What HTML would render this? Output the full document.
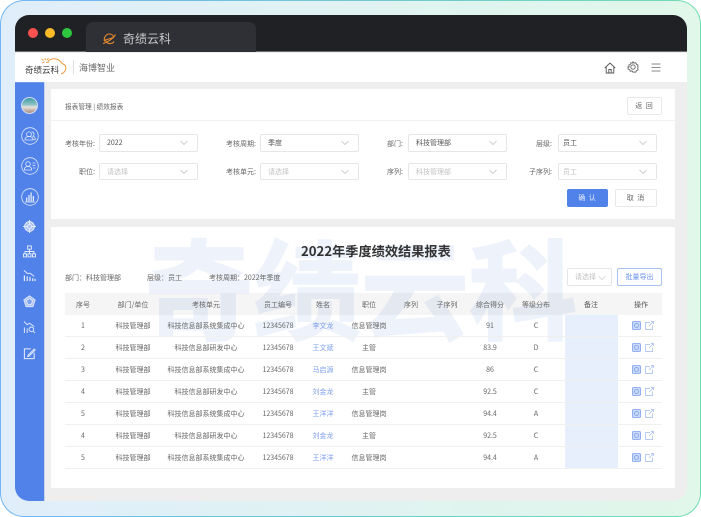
<!DOCTYPE html>
<html lang="zh">
<head>
<meta charset="utf-8">
<style>
html,body{margin:0;padding:0;width:701px;height:517px;overflow:hidden;background:#fff}
*{box-sizing:border-box}
body{font-family:"Noto Sans CJK SC","Liberation Sans",sans-serif;color:#666}
.a{position:absolute}
#outer{position:absolute;left:0;top:0;width:701px;height:517px;border-radius:24px;padding:1px;background:linear-gradient(90deg,#72b5f2,#6fdcb4)}
#outer>div{width:100%;height:100%;border-radius:23px;background:linear-gradient(90deg,#e0eefb,#e0f7e9)}
#win{position:absolute;left:15px;top:15px;width:672px;height:486px;border-radius:14px;overflow:hidden;background:#eee;filter:blur(.35px)}
.lb{position:absolute;font-size:7px;line-height:12px;color:#666;text-align:right;white-space:nowrap}
.sel{position:absolute;width:99px;height:18px;background:#fff;border:1px solid #e6e6e6;border-radius:2px;font-size:7px;line-height:17px;color:#555;padding-left:7px;white-space:nowrap}
.sel.ph{color:#c2c2c2;height:17px;line-height:16px}
.sel svg{position:absolute;right:9px;top:5px}
.btn{position:absolute;border:1px solid #e8e8e8;background:#fff;border-radius:2px;font-size:7px;text-align:center;color:#666;white-space:nowrap}
.row{position:absolute;left:50px;width:597px;height:22px;border-bottom:1px solid #f0f0f0;font-size:7px;line-height:21px;color:#666}
.row span{position:absolute;top:1px;width:90px;text-align:center;white-space:nowrap}
.hd{background:rgba(0,0,0,.04);border:0;line-height:22px;color:#666}
.c1{left:-27px}.c2{left:23px}.c3{left:96px}.c4{left:168px}.c5{left:213px}.c6{left:259px}.c7{left:301px}.c8{left:337px}.c9{left:380px}.c10{left:426px}.c11{left:481px;color:#555}.c12{left:531px;color:#555}
.l{color:#7d9fec}
.row svg{position:absolute;top:6px}
</style>
</head>
<body>
<div id="outer"><div></div></div>
<div id="win">
  <!-- title bar -->
  <div class="a" style="left:0;top:0;width:672px;height:37px;background:#202125;border-bottom:1px solid #6d6e70"></div>
  <div class="a" style="left:13px;top:13px;width:10px;height:10px;border-radius:50%;background:#f9524f"></div>
  <div class="a" style="left:30px;top:13px;width:10px;height:10px;border-radius:50%;background:#fdbb28"></div>
  <div class="a" style="left:47px;top:13px;width:10px;height:10px;border-radius:50%;background:#2ec840"></div>
  <div class="a" style="left:71px;top:7px;width:170px;height:30px;background:#2f3035;border-radius:7px 7px 0 0"></div>
  <svg class="a" style="left:87px;top:17px" width="15" height="14" viewBox="0 0 15 14" fill="none" stroke="#e58a2e" stroke-width="1.1"><path d="M2.5 9.5C1.5 5.5 4 2 7.5 2c2.5 0 4 1.5 4 3.5L3.5 8c.5 2.5 3 4 5.5 3.5 1.5-.3 2.5-1 3-2"/><path d="M1 11.5C5 10.500 11 7 13.500 2.500"/></svg>
  <div class="a" style="left:108px;top:15px;font-size:12px;line-height:18px;color:#c9c9cb;white-space:nowrap">奇绩云科</div>

  <!-- header -->
  <div class="a" style="left:0;top:38px;width:672px;height:29px;background:#fff"></div>
  <div class="a" style="left:10px;top:49px;font-size:8.5px;line-height:12px;color:#3a3a3a;white-space:nowrap">奇绩云科</div>
  <svg class="a" style="left:25px;top:42px" width="28" height="20" viewBox="0 0 28 20" fill="none"><path d="M8 4C11 2 14 1.500 16 2c3 .7 5 2.500 6 4.500 2.500.8 4 2.500 3.800 5-.2 2.500-2 4.500-4.800 5.500" stroke="#ec9a3e" stroke-width="1"/><path d="M1.500 2l2 1.500M5 .8l.3 2.500M8.500 1l-1.500 2M2 6l2.500-1.200M6 5.500l3-.5" stroke="#eb9a3e" stroke-width=".9"/></svg>
  <div class="a" style="left:58px;top:45px;width:1px;height:14px;background:#ddd"></div>
  <div class="a" style="left:64px;top:46px;font-size:9px;line-height:13px;color:#666;white-space:nowrap">海博智业</div>
  <svg class="a" style="left:589px;top:47px" width="12" height="12" viewBox="0 0 12 12" fill="none" stroke="#555" stroke-width=".9"><path d="M.8 6L6 1l5.200 5M2.200 5v6h7.600V5M4.800 11V7.500h2.400V11"/></svg>
  <svg class="a" style="left:612px;top:46px" width="12" height="12" viewBox="0 0 12 12" fill="none" stroke="#666" stroke-width=".9"><path d="M6 .8l1.100 1.300 1.700-.3.600 1.600 1.600.6-.3 1.700L11.200 6l-.5 1.300.3 1.700-1.600.6-.6 1.600-1.700-.3L6 11.200l-1.100-1.300-1.700.3-.6-1.600-1.600-.6.3-1.700L.8 6l1.300-.3L1.800 4l1.600-.6.600-1.600 1.700.3z"/><circle cx="6" cy="6" r="2.200"/></svg>
  <svg class="a" style="left:636px;top:48px" width="10" height="9" viewBox="0 0 10 9" fill="none" stroke="#888" stroke-width=".9"><path d="M.5 1h9M.5 4.500h9M.5 8h9"/></svg>

  <!-- sidebar -->
  <div class="a" style="left:0;top:67px;width:29px;height:419px;background:#5082e9;border-top:1px solid #6f97ec"></div>
  <div class="a" style="left:29px;top:67px;width:1px;height:419px;background:#c5d4ee"></div>
  <div class="a" style="left:6px;top:82px;width:17px;height:17px;border-radius:50%;background:linear-gradient(180deg,#3d9aa8 0,#8fc4c4 45%,#e8e4dc 60%,#a58a80 100%);border:.5px solid #cfdcf6"></div>
  <svg class="a" style="left:6px;top:112px" width="18" height="18" viewBox="0 0 18 18" fill="none" stroke="#dfe8fb" stroke-width=".8"><circle cx="9" cy="9" r="8.300"/><circle cx="8" cy="7.300" r="2.400"/><path d="M4 13c0-2.500 1.500-3.500 4-3.500s4 1 4 3.500zM10.500 5c1.500-.3 2.500.8 2.500 2.200 0 1-.5 1.600-1 2 1.500.5 2.300 1.500 2.300 3.300h-2"/></svg>
  <svg class="a" style="left:6px;top:142px" width="18" height="18" viewBox="0 0 18 18" fill="none" stroke="#dfe8fb" stroke-width=".8"><circle cx="9" cy="9" r="8.300"/><circle cx="7" cy="7" r="2.300"/><path d="M3.300 13c0-2.500 1.500-3.500 3.700-3.500s3.700 1 3.700 3.500zM11.500 6h3M11.500 8.500h3M12 11h2.500"/></svg>
  <svg class="a" style="left:6px;top:173px" width="18" height="18" viewBox="0 0 18 18" fill="none" stroke="#dfe8fb" stroke-width=".8"><circle cx="9" cy="9" r="8.300"/><path d="M4 14h10"/><path d="M5 9.500h1.300V13.500H5zM7.300 7h1.300v6.500H7.300zM9.500 4.500h1.300v9H9.500zM11.700 8h1.300v5.500h-1.300z" fill="#dfe8fb" stroke="none"/></svg>
  <svg class="a" style="left:8px;top:205px" width="13" height="13" viewBox="0 0 14 14" fill="none" stroke="#e6edfc" stroke-width="1.100"><circle cx="7" cy="7" r="5.200" fill="#a8c0f3"/><circle cx="7" cy="7" r="2.200"/><path d="M7 0v4.500M7 9.500V14M0 7h4.500M9.500 7H14"/></svg>
  <svg class="a" style="left:8px;top:230px" width="13" height="13" viewBox="0 0 14 13" fill="none" stroke="#e6edfc" stroke-width="1"><rect x="5" y=".5" width="4" height="3.500"/><rect x=".5" y="9" width="3.300" height="3.300"/><rect x="5.300" y="9" width="3.300" height="3.300"/><rect x="10.200" y="9" width="3.300" height="3.300"/><path d="M7 4v5M2.200 9V6.500h9.600V9"/></svg>
  <svg class="a" style="left:8px;top:254px" width="13" height="13" viewBox="0 0 14 14" fill="none" stroke="#e6edfc" stroke-width="1"><path d="M1 1.500l4 3.500 2.500-.5 4.500 3.500"/><path d="M1.500 7v6M4.500 8v5M7.500 8.500V13M10.500 10v3M13 10.500V13" stroke-width="1.300"/></svg>
  <svg class="a" style="left:8px;top:280px" width="13" height="13" viewBox="0 0 14 14" fill="#e6edfc" stroke="#e6edfc" stroke-width=".8"><path d="M7 .8l6.200 4.500-2.400 7.300H3.200L.8 5.300z" fill-opacity=".65"/><path d="M7 3.800l3.200 2.300L9 10H5L3.800 6.100z" fill="#7b9eed"/></svg>
  <svg class="a" style="left:8px;top:305px" width="13" height="14" viewBox="0 0 14 15" fill="none" stroke="#e6edfc" stroke-width="1"><path d="M1 1.500l3.500 3.500L7 3.500 12 7"/><path d="M1.500 8v6M4.500 9v5"/><circle cx="9" cy="10" r="2.500"/><path d="M11 12l2 2"/></svg>
  <svg class="a" style="left:8px;top:332px" width="13" height="13" viewBox="0 0 14 14" fill="none" stroke="#e6edfc" stroke-width="1.100"><path d="M8.500 2H1.500v10.500H12V6"/><path d="M5.500 8.800L12 2.200l1 1-6.500 6.600-1.500.2z"/></svg>

  <!-- card 1 -->
  <div class="a" style="left:36px;top:74px;width:624px;height:130px;background:#fff"></div>
  <div class="a" style="left:36px;top:105px;width:624px;height:1px;background:#f2f2f2"></div>
  <div class="a" style="left:50px;top:85px;font-size:6.7px;line-height:12px;color:#666;white-space:nowrap">报表管理 | 绩效报表</div>
  <div class="btn" style="left:612px;top:82px;width:35px;height:18px;line-height:17px;letter-spacing:1px">返 回</div>

  <div class="lb" style="left:38px;top:123px;width:42px">考核年份:</div>
  <div class="sel" style="left:84px;top:119px">2022<svg width="8" height="6" viewBox="0 0 8 6" fill="none" stroke="#bbb" stroke-width=".7"><path d="M.5 1l3.500 3.500L7.500 1"/></svg></div>
  <div class="lb" style="left:199px;top:123px;width:42px">考核周期:</div>
  <div class="sel" style="left:245px;top:119px">季度<svg width="8" height="6" viewBox="0 0 8 6" fill="none" stroke="#bbb" stroke-width=".7"><path d="M.5 1l3.500 3.500L7.500 1"/></svg></div>
  <div class="lb" style="left:346px;top:123px;width:42px">部门:</div>
  <div class="sel" style="left:393px;top:119px">科技管理部<svg width="8" height="6" viewBox="0 0 8 6" fill="none" stroke="#bbb" stroke-width=".7"><path d="M.5 1l3.500 3.500L7.500 1"/></svg></div>
  <div class="lb" style="left:495px;top:123px;width:42px">层级:</div>
  <div class="sel" style="left:543px;top:119px;padding-left:4px">员工<svg width="8" height="6" viewBox="0 0 8 6" fill="none" stroke="#bbb" stroke-width=".7"><path d="M.5 1l3.500 3.500L7.500 1"/></svg></div>

  <div class="lb" style="left:38px;top:151px;width:42px">职位:</div>
  <div class="sel ph" style="left:84px;top:148px">请选择<svg width="8" height="6" viewBox="0 0 8 6" fill="none" stroke="#bbb" stroke-width=".7"><path d="M.5 1l3.500 3.500L7.500 1"/></svg></div>
  <div class="lb" style="left:199px;top:151px;width:42px">考核单元:</div>
  <div class="sel ph" style="left:245px;top:148px">请选择<svg width="8" height="6" viewBox="0 0 8 6" fill="none" stroke="#bbb" stroke-width=".7"><path d="M.5 1l3.500 3.500L7.500 1"/></svg></div>
  <div class="lb" style="left:346px;top:151px;width:42px">序列:</div>
  <div class="sel ph" style="left:393px;top:148px">科技管理部<svg width="8" height="6" viewBox="0 0 8 6" fill="none" stroke="#bbb" stroke-width=".7"><path d="M.5 1l3.500 3.500L7.500 1"/></svg></div>
  <div class="lb" style="left:495px;top:151px;width:42px">子序列:</div>
  <div class="sel ph" style="left:543px;top:148px;padding-left:4px">员工<svg width="8" height="6" viewBox="0 0 8 6" fill="none" stroke="#bbb" stroke-width=".7"><path d="M.5 1l3.500 3.500L7.500 1"/></svg></div>

  <div class="btn" style="left:552px;top:174px;width:41px;height:18px;line-height:17px;background:#5082e9;border-color:#5082e9;color:#e4ecfc;letter-spacing:1px">确 认</div>
  <div class="btn" style="left:600px;top:174px;width:42px;height:18px;line-height:17px;letter-spacing:1px">取 消</div>

  <!-- card 2 -->
  <div class="a" style="left:36px;top:212px;width:624px;height:261px;background:#fff;overflow:hidden">
    <div class="a" style="left:94px;top:-7px;font-size:108px;line-height:130px;font-weight:700;color:#edf2fb;white-space:nowrap;-webkit-text-stroke:2px #edf2fb;paint-order:stroke">奇绩云科</div>
  </div>
  <div class="a" style="left:286px;top:226px;font-size:13.2px;line-height:20px;font-weight:700;color:#333;white-space:nowrap">2022年季度绩效结果报表</div>
  <div class="lb" style="left:50px;top:257px">部门：科技管理部</div>
  <div class="lb" style="left:132px;top:257px">层级：员工</div>
  <div class="lb" style="left:194px;top:257px">考核周期：2022年季度</div>
  <div class="sel ph" style="left:552px;top:253px;width:45px;height:18px;line-height:17px">请选择<svg style="right:5px;top:6px" width="8" height="6" viewBox="0 0 8 6" fill="none" stroke="#ccc" stroke-width=".7"><path d="M.5 1l3.500 3.500L7.500 1"/></svg></div>
  <div class="btn" style="left:602px;top:253px;width:45px;height:18px;line-height:17px;border-color:#a9c2f4;color:#6f95ea">批量导出</div>

  <div class="a" style="left:550px;top:300px;width:53px;height:154px;background:#e8effc"></div>

  <div class="row hd" style="top:278px"><span class="c1">序号</span><span class="c2">部门/单位</span><span class="c3">考核单元</span><span class="c4">员工编号</span><span class="c5">姓名</span><span class="c6">职位</span><span class="c7">序列</span><span class="c8">子序列</span><span class="c9">综合得分</span><span class="c10">等级分布</span><span class="c11">备注</span><span class="c12">操作</span></div>

  <div class="row" style="top:300px"><span class="c1">1</span><span class="c2">科技管理部</span><span class="c3">科技信息部系统集成中心</span><span class="c4">12345678</span><span class="c5 l">李文龙</span><span class="c6">信息管理岗</span><span class="c9">91</span><span class="c10">C</span><svg style="left:567px" width="9" height="9" viewBox="0 0 9 9" fill="none" stroke="#7d9fec" stroke-width=".8"><rect x=".5" y=".5" width="8" height="8" rx="1" fill="#c9d9f8"/><circle cx="4.500" cy="4.500" r="2"/></svg><svg style="left:580px" width="9" height="9" viewBox="0 0 9 9" fill="none" stroke="#9db8f0" stroke-width=".7"><path d="M5 1.500H.5v7h7V4.500M4 5l4.500-4.500M6 .5h2.500V3"/></svg></div>
  <div class="row" style="top:322px"><span class="c1">2</span><span class="c2">科技管理部</span><span class="c3">科技信息部研发中心</span><span class="c4">12345678</span><span class="c5 l">王文斌</span><span class="c6">主管</span><span class="c9">83.9</span><span class="c10">D</span><svg style="left:567px" width="9" height="9" viewBox="0 0 9 9" fill="none" stroke="#7d9fec" stroke-width=".8"><rect x=".5" y=".5" width="8" height="8" rx="1" fill="#c9d9f8"/><circle cx="4.500" cy="4.500" r="2"/></svg><svg style="left:580px" width="9" height="9" viewBox="0 0 9 9" fill="none" stroke="#9db8f0" stroke-width=".7"><path d="M5 1.500H.5v7h7V4.500M4 5l4.500-4.500M6 .5h2.500V3"/></svg></div>
  <div class="row" style="top:344px"><span class="c1">3</span><span class="c2">科技管理部</span><span class="c3">科技信息部系统集成中心</span><span class="c4">12345678</span><span class="c5 l">马启源</span><span class="c6">信息管理岗</span><span class="c9">86</span><span class="c10">C</span><svg style="left:567px" width="9" height="9" viewBox="0 0 9 9" fill="none" stroke="#7d9fec" stroke-width=".8"><rect x=".5" y=".5" width="8" height="8" rx="1" fill="#c9d9f8"/><circle cx="4.500" cy="4.500" r="2"/></svg><svg style="left:580px" width="9" height="9" viewBox="0 0 9 9" fill="none" stroke="#9db8f0" stroke-width=".7"><path d="M5 1.500H.5v7h7V4.500M4 5l4.500-4.500M6 .5h2.500V3"/></svg></div>
  <div class="row" style="top:366px"><span class="c1">4</span><span class="c2">科技管理部</span><span class="c3">科技信息部研发中心</span><span class="c4">12345678</span><span class="c5 l">刘金龙</span><span class="c6">主管</span><span class="c9">92.5</span><span class="c10">C</span><svg style="left:567px" width="9" height="9" viewBox="0 0 9 9" fill="none" stroke="#7d9fec" stroke-width=".8"><rect x=".5" y=".5" width="8" height="8" rx="1" fill="#c9d9f8"/><circle cx="4.500" cy="4.500" r="2"/></svg><svg style="left:580px" width="9" height="9" viewBox="0 0 9 9" fill="none" stroke="#9db8f0" stroke-width=".7"><path d="M5 1.500H.5v7h7V4.500M4 5l4.500-4.500M6 .5h2.500V3"/></svg></div>
  <div class="row" style="top:388px"><span class="c1">5</span><span class="c2">科技管理部</span><span class="c3">科技信息部系统集成中心</span><span class="c4">12345678</span><span class="c5 l">王洋洋</span><span class="c6">信息管理岗</span><span class="c9">94.4</span><span class="c10">A</span><svg style="left:567px" width="9" height="9" viewBox="0 0 9 9" fill="none" stroke="#7d9fec" stroke-width=".8"><rect x=".5" y=".5" width="8" height="8" rx="1" fill="#c9d9f8"/><circle cx="4.500" cy="4.500" r="2"/></svg><svg style="left:580px" width="9" height="9" viewBox="0 0 9 9" fill="none" stroke="#9db8f0" stroke-width=".7"><path d="M5 1.500H.5v7h7V4.500M4 5l4.500-4.500M6 .5h2.500V3"/></svg></div>
  <div class="row" style="top:410px"><span class="c1">4</span><span class="c2">科技管理部</span><span class="c3">科技信息部研发中心</span><span class="c4">12345678</span><span class="c5 l">刘金龙</span><span class="c6">主管</span><span class="c9">92.5</span><span class="c10">C</span><svg style="left:567px" width="9" height="9" viewBox="0 0 9 9" fill="none" stroke="#7d9fec" stroke-width=".8"><rect x=".5" y=".5" width="8" height="8" rx="1" fill="#c9d9f8"/><circle cx="4.500" cy="4.500" r="2"/></svg><svg style="left:580px" width="9" height="9" viewBox="0 0 9 9" fill="none" stroke="#9db8f0" stroke-width=".7"><path d="M5 1.500H.5v7h7V4.500M4 5l4.500-4.500M6 .5h2.500V3"/></svg></div>
  <div class="row" style="top:432px"><span class="c1">5</span><span class="c2">科技管理部</span><span class="c3">科技信息部系统集成中心</span><span class="c4">12345678</span><span class="c5 l">王洋洋</span><span class="c6">信息管理岗</span><span class="c9">94.4</span><span class="c10">A</span><svg style="left:567px" width="9" height="9" viewBox="0 0 9 9" fill="none" stroke="#7d9fec" stroke-width=".8"><rect x=".5" y=".5" width="8" height="8" rx="1" fill="#c9d9f8"/><circle cx="4.500" cy="4.500" r="2"/></svg><svg style="left:580px" width="9" height="9" viewBox="0 0 9 9" fill="none" stroke="#9db8f0" stroke-width=".7"><path d="M5 1.500H.5v7h7V4.500M4 5l4.500-4.500M6 .5h2.500V3"/></svg></div>
</div>
</body>
</html>
